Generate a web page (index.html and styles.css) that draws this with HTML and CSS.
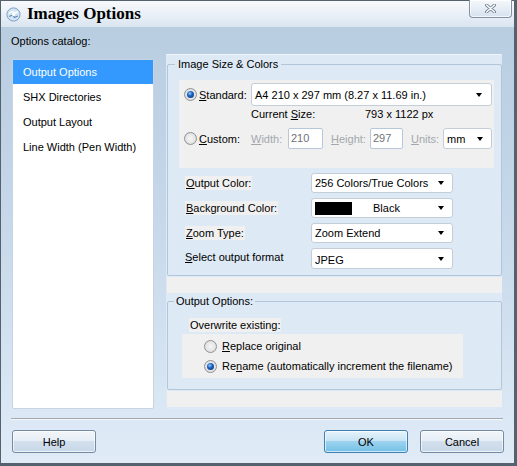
FILE: index.html
```html
<!DOCTYPE html>
<html>
<head>
<meta charset="utf-8">
<title>Images Options</title>
<link rel="stylesheet" href="styles.css">
</head>
<body>
<div class="window">
  <div class="titlebar">
    <svg class="app-icon" width="15" height="15" viewBox="0 0 15 15">
      <circle cx="7.5" cy="7.5" r="6.6" fill="#d3e3f2" stroke="#7fa3c8" stroke-width="1"/>
      <path d="M3 6.5 L6 4.5 L9 6 L12 4.8" fill="none" stroke="#ffffff" stroke-width="1.4"/>
      <path d="M3.2 9.5 L6.5 8 L8.5 10.5 L11.8 9" fill="none" stroke="#5f8dbb" stroke-width="1.2"/>
      <circle cx="7.5" cy="7.5" r="1.6" fill="#ffffff"/>
    </svg>
    <span class="title">Images Options</span>
    <div class="close">
      <svg width="11" height="9" viewBox="0 0 11 9">
        <path d="M1.5 1 L9.5 8 M9.5 1 L1.5 8" stroke="#6f7f91" stroke-width="3" stroke-linecap="round"/>
        <path d="M1.5 1 L9.5 8 M9.5 1 L1.5 8" stroke="#ffffff" stroke-width="1.4" stroke-linecap="round"/>
      </svg>
    </div>
  </div>
  <div class="client">
    <div class="catalog-label">Options catalog:</div>
    <div class="main">
      <ul class="catalog">
        <li class="sel">Output Options</li>
        <li>SHX Directories</li>
        <li>Output Layout</li>
        <li>Line Width (Pen Width)</li>
      </ul>
      <div class="panel">
        <fieldset class="group g-size">
          <legend>Image Size &amp; Colors</legend>
          <div class="sizebox">
            <div class="row r-std">
              <span class="radio on"></span>
              <span class="lbl w52"><u>S</u>tandard:</span>
              <div class="select s-wide"><span>A4 210 x 297 mm (8.27 x 11.69 in.)</span><i class="arrow"></i></div>
            </div>
            <div class="row r-cur">
              <span class="cur-lbl">Current <u>S</u>ize:</span><span>793 x 1122 px</span>
            </div>
            <div class="row r-cus">
              <span class="radio"></span>
              <span class="lbl w52"><u>C</u>ustom:</span>
              <span class="dis w37"><u>W</u>idth:</span>
              <div class="input w35">210</div>
              <span class="dis w39 gap8"><u>H</u>eight:</span>
              <div class="input w33">297</div>
              <span class="dis w32 gap8"><u>U</u>nits:</span>
              <div class="select s-units"><span>mm</span><i class="arrow"></i></div>
            </div>
          </div>
          <div class="orows">
            <div class="orow">
              <div class="olbl"><span class="hl"><u>O</u>utput Color:</span></div>
              <div class="select s-out"><span>256 Colors/True Colors</span><i class="arrow"></i></div>
            </div>
            <div class="orow">
              <div class="olbl"><span class="hl"><u>B</u>ackground Color:</span></div>
              <div class="select s-out"><span class="swatch"></span><span class="black">Black</span><i class="arrow"></i></div>
            </div>
            <div class="orow">
              <div class="olbl"><span class="hl"><u>Z</u>oom Type:</span></div>
              <div class="select s-out"><span>Zoom Extend</span><i class="arrow"></i></div>
            </div>
            <div class="orow last">
              <div class="olbl up"><span><u>S</u>elect output format</span></div>
              <div class="select s-out"><span class="jpeg">JPEG</span><i class="arrow"></i></div>
            </div>
          </div>
        </fieldset>
        <div class="strip"></div>
        <fieldset class="group g-out">
          <legend>Output Options:</legend>
          <div class="ow"><span class="hl">Overwrite existing:</span></div>
          <div class="radiobox">
            <div class="rrow"><span class="radio"></span><span><u>R</u>eplace original</span></div>
            <div class="rrow"><span class="radio on"></span><span>Re<u>n</u>ame (automatically increment the filename)</span></div>
          </div>
        </fieldset>
        <div class="strip"></div>
      </div>
    </div>
    <div class="sep"></div>
    <div class="buttons">
      <button class="btn help">Help</button>
      <button class="btn ok">OK</button>
      <button class="btn cancel">Cancel</button>
    </div>
  </div>
</div>
</body>
</html>
```

FILE: styles.css
```css
* { box-sizing: border-box; }
html, body { margin: 0; padding: 0; }
body {
  width: 517px;
  height: 466px;
  overflow: hidden;
  font-family: "Liberation Sans", Arial, sans-serif;
  font-size: 11px;
  color: #000;
  background: #fff;
}
u { text-decoration: underline; text-underline-offset: 1px; }

.window {
  width: 517px;
  height: 466px;
  border: 1px solid #56616e;
  border-right-width: 3px;
  border-bottom-width: 3px;
  display: flex;
  flex-direction: column;
  background: #b9cde1;
}

/* Title bar */
.titlebar {
  height: 26px;
  flex: none;
  display: flex;
  align-items: center;
  padding-left: 5px;
  background: linear-gradient(#f7f9fc, #eaf0f7 50%, #dae5f0);
}
.app-icon { flex: none; }
.title {
  margin-left: 6px;
  font-family: "Liberation Serif", "Times New Roman", serif;
  font-weight: bold;
  font-size: 17px;
  line-height: 20px;
  color: #000;
}
.close {
  margin-left: auto;
  margin-right: 2px;
  margin-top: -1px;
  align-self: flex-start;
  width: 43px;
  height: 18px;
  border: 1px solid #8192a7;
  border-top: none;
  border-radius: 0 0 4px 4px;
  background: linear-gradient(#f5f8fb, #e6edf5 50%, #d6e2ee);
  display: flex;
  align-items: center;
  justify-content: center;
  box-shadow: inset 0 0 0 1px rgba(255,255,255,0.7);
}

/* Client */
.client {
  flex: 1;
  display: flex;
  flex-direction: column;
  background: linear-gradient(#b9cde1 0%, #c6d8ea 45%, #e0ebf7 100%);
}
.catalog-label {
  margin: 7px 0 0 10px;
  line-height: 14px;
}
.main {
  display: flex;
  align-items: flex-start;
  margin-top: 6px;
  height: 355px;
}
.catalog {
  list-style: none;
  margin: 5px 0 0 11px;
  padding: 0;
  width: 142px;
  height: 350px;
  background: #fff;
  border: 1px solid #c7d4e1;
  border-radius: 2px;
}
.catalog li {
  height: 25px;
  line-height: 25px;
  padding-left: 10px;
  white-space: nowrap;
}
.catalog li.sel {
  color: #fff;
  background: linear-gradient(#3399ff, #3399ff) top left / 100% 24px no-repeat;
}

/* Right panel */
.panel {
  margin-left: 12px;
  width: 336px;
  height: 355px;
  background: #dde9f5;
  border-top: 1px solid #edf3fa;
}
.group {
  margin: 0 0 0 1px;
  padding: 0;
  width: 335px;
  min-width: 0;
  border: 1px solid #b3c5d8;
  border-radius: 2px;
}
.group legend {
  padding: 0 3px;
  line-height: 14px;
  font-size: 11px;
}
.g-size { margin-top: 2px; padding-bottom: 6px; }
.g-size legend { margin-left: 7px; }

.sizebox {
  margin: 9px 0 0 11px;
  width: 315px;
  height: 88px;
  background: #f0f0f0;
  padding-top: 3px;
}
.row { display: flex; align-items: center; }
.r-std { height: 23px; padding-left: 5px; }
.r-cur { margin-top: 1px; height: 14px; line-height: 14px; padding-left: 72px; }
.cur-lbl { width: 114px; }
.r-cus { margin-top: 7px; height: 21px; padding-left: 5px; }

.lbl { flex: none; }
.w52 { width: 52px; }
.w37 { width: 37px; }
.w39 { width: 39px; }
.w32 { width: 32px; }
.w35 { width: 35px; }
.w33 { width: 33px; }
.gap8 { margin-left: 8px; }
.dis { color: #a2a8ae; flex: none; }

.radio {
  flex: none;
  width: 13px;
  height: 13px;
  margin-right: 2px;
  border-radius: 50%;
  border: 1px solid #8e9194;
  background: radial-gradient(circle at 50% 50%, #f6f6f6 0%, #e6e6e6 55%, #cfd1d3 100%);
  position: relative;
}
.radio.on::after {
  content: "";
  position: absolute;
  left: 2px;
  top: 2px;
  width: 7px;
  height: 7px;
  border-radius: 50%;
  background: radial-gradient(circle at 40% 35%, #8fd0ff 0%, #1f5fc0 40%, #0b2f70 100%);
}

.select {
  display: flex;
  align-items: center;
  background: #fff;
  border: 1px solid #c4ced9;
  border-radius: 3px;
  padding-left: 3px;
  white-space: nowrap;
  height: 100%;
}
.s-wide { width: 241px; height: 23px; }
.s-units { width: 49px; height: 21px; }
.s-out { width: 142px; }
.arrow {
  margin-left: auto;
  margin-right: 8px;
  width: 0;
  height: 0;
  border-left: 3.5px solid transparent;
  border-right: 3.5px solid transparent;
  border-top: 4px solid #000;
  flex: none;
}
.s-wide .arrow { margin-right: 9px; }
.input {
  height: 21px;
  background: #fff;
  border: 1px solid #b7c8da;
  border-radius: 2px;
  padding-left: 2px;
  line-height: 19px;
  color: #6f7378;
  flex: none;
}

.orows { margin-top: 5px; padding-left: 17px; }
.orow { display: flex; align-items: center; height: 20px; margin-bottom: 5px; }
.orow.last { height: 21px; margin-bottom: 0; }
.olbl { width: 126px; flex: none; }
.olbl.up { margin-top: -4px; }
.hl { display: inline-block; background: #f0f0f0; padding: 0 1px; line-height: 14px; }
.swatch { width: 37px; height: 13px; background: #000; flex: none; }
.black { margin-left: 21px; }
.jpeg { padding-top: 2px; }

.strip {
  margin: 1px 0 0 1px;
  width: 335px;
  height: 16px;
  background: #f0f0f0;
}

.g-out { margin-top: 1px; padding-bottom: 11px; }
.g-out legend { margin-left: 6px; padding: 0 2px; }
.ow { margin-top: 10px; padding-left: 21px; line-height: 14px; }
.radiobox {
  margin: 2px 0 0 14px;
  width: 281px;
  height: 44px;
  background: #f0f0f0;
  padding: 2px 0 0 22px;
}
.rrow { display: flex; align-items: center; height: 20px; white-space: nowrap; }
.rrow .radio { margin-right: 5px; }

.sep {
  margin: 9px 0 0 10px;
  width: 492px;
  height: 2px;
  border-top: 1px solid #a3a8ad;
  border-bottom: 1px solid #f4f8fc;
}
.buttons {
  display: flex;
  margin-top: 10px;
  padding: 0 10px 0 11px;
}
.btn {
  width: 84px;
  height: 23px;
  padding: 0;
  font-family: "Liberation Sans", Arial, sans-serif;
  font-size: 11px;
  color: #000;
  border: 1px solid #7489a2;
  border-radius: 3px;
  background: linear-gradient(#f2f6fa 0%, #e7eef6 45%, #d2dfec 50%, #c8d8e8 100%);
  box-shadow: inset 0 0 0 1px rgba(255,255,255,0.65);
}
.btn.ok {
  margin-left: auto;
  border-color: #3d7fb3;
  background: linear-gradient(#e6f3fb 0%, #c9e4f4 45%, #9ed3ef 50%, #72c0e6 100%);
}
.btn.cancel { margin-left: 12px; }
```
